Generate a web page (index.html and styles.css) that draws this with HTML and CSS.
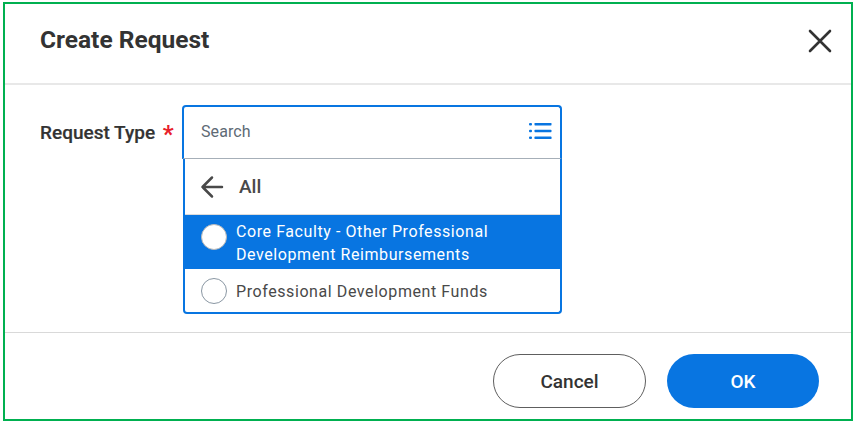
FILE: index.html
```html
<!DOCTYPE html>
<html lang="en">
<head>
<meta charset="utf-8">
<title>Create Request</title>
<link rel="stylesheet" href="styles.css">
</head>
<body>
<div class="frame">
  <header class="head">
    <h1 class="title">Create Request</h1>
    <svg class="close" width="24" height="24" viewBox="0 0 24 24"><path d="M2 2 L22 22 M22 2 L2 22" fill="none" stroke="#333" stroke-width="2.6" stroke-linecap="round"/></svg>
  </header>
  <main class="body">
    <div class="label">Request Type <span class="req">*</span></div>
    <div class="picker">
      <div class="search">
        <span class="placeholder">Search</span>
        <svg class="list-icon" width="23" height="18" viewBox="0 0 23 18"><g fill="#0875e1"><rect x="0" y="1" width="3" height="2.4" rx="1"/><rect x="0" y="7.8" width="3" height="2.4" rx="1"/><rect x="0" y="14.6" width="3" height="2.4" rx="1"/><rect x="5.5" y="1" width="17" height="2.4" rx=".6"/><rect x="5.5" y="7.8" width="17" height="2.4" rx=".6"/><rect x="5.5" y="14.6" width="17" height="2.4" rx=".6"/></g></svg>
      </div>
      <div class="menu">
        <div class="back">
          <svg width="24" height="24" viewBox="0 0 24 24"><path d="M22 12 H2.5 M12 2.5 L2.5 12 L12 21.5" fill="none" stroke="#494949" stroke-width="2.5" stroke-linecap="round" stroke-linejoin="round"/></svg>
          <span class="back-text">All</span>
        </div>
        <div class="option selected"><span class="radio"></span><span class="opt-text">Core Faculty - Other Professional Development Reimbursements</span></div>
        <div class="option"><span class="radio"></span><span class="opt-text">Professional Development Funds</span></div>
      </div>
    </div>
  </main>
  <footer class="foot">
    <button class="btn cancel">Cancel</button>
    <button class="btn ok">OK</button>
  </footer>
</div>
</body>
</html>
```
FILE: styles.css
```css
* { box-sizing: border-box; }
html, body { margin: 0; padding: 0; background: #fff; }
body { padding: 2px 5px 3px 3px; width: 858px; height: 424px; font-family: Roboto, "Liberation Sans", sans-serif; }
.frame { height: 419px; border: 2px solid #00b050; display: flex; flex-direction: column; background: #fff; }
.head { height: 81px; flex: none; display: flex; align-items: center; justify-content: space-between; padding: 0 19px 8px 35px; border-bottom: 2px solid #e8e8e8; }
.title { margin: 0; font-size: 24.5px; font-weight: 700; color: #333; line-height: 30px; }
.close { display: block; margin-top: 2px; }
.body { height: 247px; flex: none; display: flex; padding: 20px 0 0 35px; }
.label { width: 142px; flex: none; padding-top: 17px; font-size: 19px; font-weight: 500; line-height: 22px; color: #333; white-space: nowrap; -webkit-text-stroke: .2px #333; }
.req { color: #e8202a; -webkit-text-stroke: 0; font-size: 24px; line-height: 18px; font-weight: 700; margin-left: 3px; vertical-align: -3px; }
.picker { width: 380px; flex: none; }
.search { height: 54px; border: 2px solid #0875e1; border-bottom: 1px solid #a6afb8; border-radius: 4px 4px 0 0; display: flex; align-items: center; justify-content: space-between; padding: 0 9px 2px 17px; }
.placeholder { font-size: 16px; color: #5e6a75; letter-spacing: .1px; }
.list-icon { display: block; margin: -2px -1px 0 0; }
.menu { width: 379px; margin-left: 1px; height: 155px; border: 2px solid #0875e1; border-top: 0; border-radius: 0 0 4px 4px; overflow: hidden; }
.back { height: 56px; display: flex; align-items: center; padding-left: 15px; gap: 15px; border-bottom: 1px solid #dcdcdc; }
.back svg { display: block; }
.back-text { font-size: 19px; font-weight: 500; color: #494949; }
.option { display: flex; align-items: flex-start; padding-left: 16px; font-size: 16px; line-height: 23px; letter-spacing: .58px; color: #494949; }
.option.selected { height: 54px; background: #0875e1; color: #fff; padding-top: 5px; }
.option:not(.selected) { padding-top: 11px; }
.radio { width: 26px; height: 26px; flex: none; border-radius: 50%; background: #fff; border: 1px solid #8a97a3; margin-right: 9px; }
.selected .radio { margin-top: 4px; border-color: #b8b8b8; }
.option:not(.selected) .radio { margin-top: -2px; }
.opt-text { display: block; width: 270px; }
.option:not(.selected) .opt-text { width: auto; white-space: nowrap; }
.foot { flex: 1; border-top: 1px solid #d9d9d9; display: flex; justify-content: flex-end; align-items: flex-start; gap: 21px; padding: 21px 32px 0 0; }
.btn { height: 54px; border-radius: 27px; font-family: inherit; font-size: 19px; font-weight: 500; cursor: pointer; }
.cancel { width: 153px; background: #fff; border: 1px solid #5e5e5e; color: #333; }
.ok { width: 152px; background: #0875e1; border: 0; color: #fff; }
```
